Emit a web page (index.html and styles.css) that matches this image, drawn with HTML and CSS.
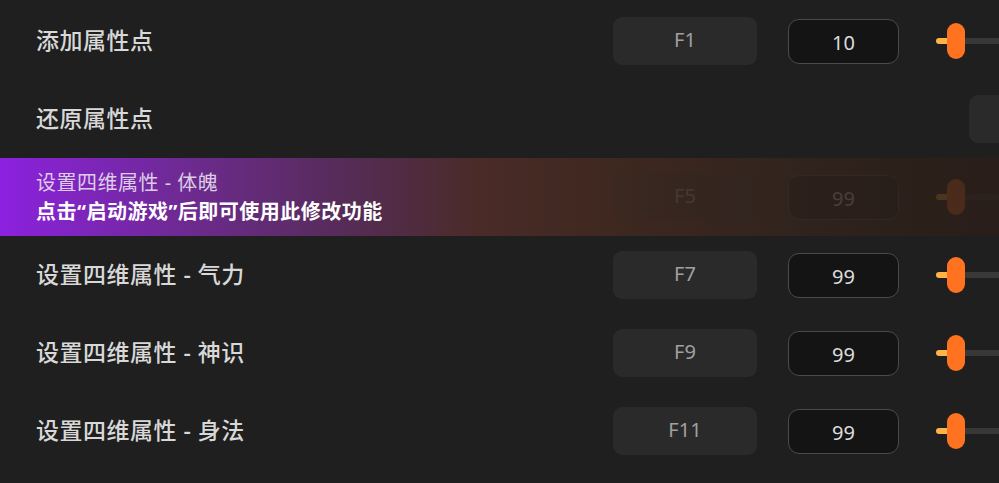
FILE: index.html
```html
<!DOCTYPE html>
<html lang="zh-CN">
<head>
  <meta charset="UTF-8">
  <title>修改功能</title>
  <link rel="stylesheet" href="styles.css">
</head>
<body>

<div class="list">
  <div class="row">
    <div class="label">添加属性点</div>
    <div class="key">F1</div>
    <div class="num">10</div>
    <div class="slider"><span class="fill"></span><span class="thumb"></span><span class="track"></span></div>
  </div>

  <div class="row">
    <div class="label">还原属性点</div>
    <div class="key key-far"></div>
  </div>

  <div class="row row-locked">
    <div class="label">
      <div class="locked-title">设置四维属性 - 体魄</div>
      <div class="locked-msg">点击“启动游戏”后即可使用此修改功能</div>
    </div>
    <div class="key">F5</div>
    <div class="num">99</div>
    <div class="slider"><span class="fill"></span><span class="thumb"></span><span class="track"></span></div>
  </div>

  <div class="row">
    <div class="label">设置四维属性 - 气力</div>
    <div class="key">F7</div>
    <div class="num">99</div>
    <div class="slider"><span class="fill"></span><span class="thumb"></span><span class="track"></span></div>
  </div>

  <div class="row">
    <div class="label">设置四维属性 - 神识</div>
    <div class="key">F9</div>
    <div class="num">99</div>
    <div class="slider"><span class="fill"></span><span class="thumb"></span><span class="track"></span></div>
  </div>

  <div class="row">
    <div class="label">设置四维属性 - 身法</div>
    <div class="key">F11</div>
    <div class="num">99</div>
    <div class="slider"><span class="fill"></span><span class="thumb"></span><span class="track"></span></div>
  </div>
</div>

</body>
</html>
```

FILE: styles.css
```css
* { box-sizing: border-box; }
html, body {
  margin: 0;
  background: #1f1f1f;
  overflow: hidden;
}
body {
  padding-top: 2px;
  font-family: "Noto Sans", "Noto Sans CJK SC", sans-serif;
  color: #d6d6d6;
}
.list {
  width: 1300px;
}
.row {
  display: flex;
  align-items: center;
  height: 78px;
  padding-left: 36px;
}
.label {
  width: 577px;
  flex: none;
  font-size: 23px;
  font-weight: 500;
  letter-spacing: 0.5px;
  color: #d8d8d8;
  padding-bottom: 5px;
}
.key {
  flex: none;
  width: 144px;
  height: 48px;
  border-radius: 9px;
  background: #2a2a2a;
  color: #a0a0a0;
  font-size: 20px;
  display: flex;
  align-items: center;
  justify-content: center;
  padding-bottom: 4px;
}
.key-far {
  margin-left: 356px;
}
.num {
  flex: none;
  width: 111px;
  height: 45px;
  margin-left: 31px;
  border-radius: 11px;
  background: #141414;
  border: 1.5px solid #4a4a4a;
  color: #dcdcdc;
  font-size: 20px;
  display: flex;
  align-items: center;
  justify-content: center;
  padding-top: 2px;
}
.slider {
  flex: none;
  margin-left: 37px;
  width: 300px;
  height: 36px;
  display: flex;
  align-items: center;
}
.fill {
  width: 14px;
  height: 6px;
  margin-right: -3px;
  border-radius: 3px 0 0 3px;
  background: #ffb347;
}
.thumb {
  position: relative;
  z-index: 1;
  width: 18px;
  height: 36px;
  border-radius: 9px;
  background: #ff7320;
}
.track {
  flex: 1;
  height: 6px;
  background: #383838;
}
.row-locked {
  background: linear-gradient(90deg, #8c21e0 0%, #6e2a92 14%, #552c55 27%, #4a2b27 37%, #3e2820 47%, #30231d 62%, #271c18 80%, #221a17 100%);
}
.row-locked .label {
  padding-bottom: 0;
}
.row-locked .key,
.row-locked .num,
.row-locked .slider {
  opacity: 0.15;
}
.locked-title {
  font-size: 20px;
  font-weight: 400;
  line-height: 29px;
  color: #dccde6;
}
.locked-msg {
  font-size: 20px;
  line-height: 29px;
  font-weight: bold;
  color: #ffffff;
  letter-spacing: 0.5px;
}
```
